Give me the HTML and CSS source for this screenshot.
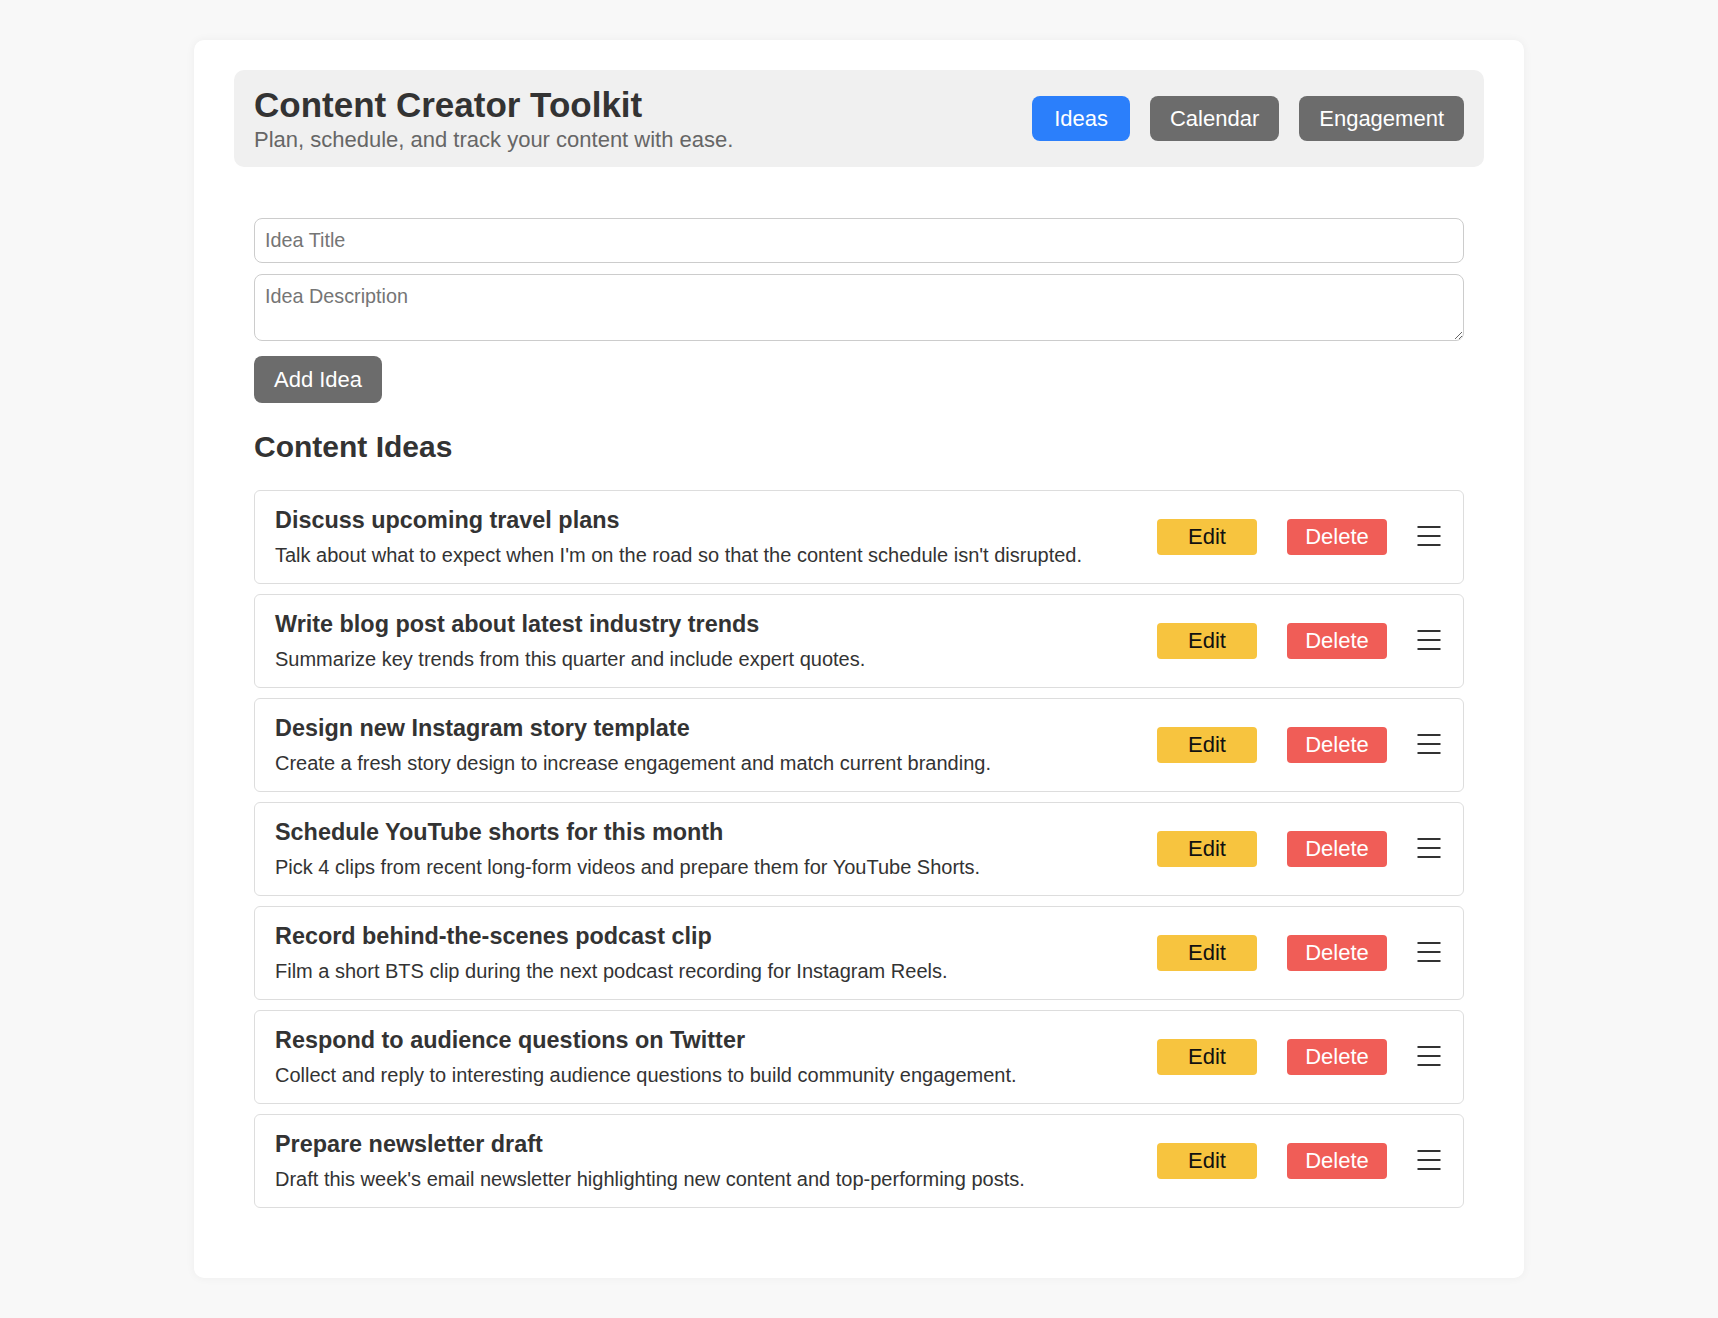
FILE: index.html
```html
<!DOCTYPE html>
<html lang="en">
<head>
<meta charset="utf-8">
<title>Content Creator Toolkit</title>
<link rel="stylesheet" href="styles.css">
</head>
<body>
<div class="app">
  <header class="topbar">
    <div class="brand">
      <h1>Content Creator Toolkit</h1>
      <p>Plan, schedule, and track your content with ease.</p>
    </div>
    <nav class="tabs">
      <button class="tab active">Ideas</button>
      <button class="tab">Calendar</button>
      <button class="tab">Engagement</button>
    </nav>
  </header>

  <section class="panel">
    <form class="idea-form">
      <input class="field" type="text" placeholder="Idea Title">
      <textarea class="field area" placeholder="Idea Description"></textarea>
      <button type="button" class="add-btn">Add Idea</button>
    </form>

    <h2 class="section-title">Content Ideas</h2>

    <ul class="idea-list">
      <li class="idea">
        <div class="idea-text">
          <h3>Discuss upcoming travel plans</h3>
          <p>Talk about what to expect when I'm on the road so that the content schedule isn't disrupted.</p>
        </div>
        <div class="actions">
          <button class="btn edit">Edit</button>
          <button class="btn delete">Delete</button>
          <svg class="handle" width="24" height="20" viewBox="0 0 24 20"><path d="M0.5 1h23M0.5 10h23M0.5 19h23" stroke="#333" stroke-width="2"/></svg>
        </div>
      </li>
      <li class="idea">
        <div class="idea-text">
          <h3>Write blog post about latest industry trends</h3>
          <p>Summarize key trends from this quarter and include expert quotes.</p>
        </div>
        <div class="actions">
          <button class="btn edit">Edit</button>
          <button class="btn delete">Delete</button>
          <svg class="handle" width="24" height="20" viewBox="0 0 24 20"><path d="M0.5 1h23M0.5 10h23M0.5 19h23" stroke="#333" stroke-width="2"/></svg>
        </div>
      </li>
      <li class="idea">
        <div class="idea-text">
          <h3>Design new Instagram story template</h3>
          <p>Create a fresh story design to increase engagement and match current branding.</p>
        </div>
        <div class="actions">
          <button class="btn edit">Edit</button>
          <button class="btn delete">Delete</button>
          <svg class="handle" width="24" height="20" viewBox="0 0 24 20"><path d="M0.5 1h23M0.5 10h23M0.5 19h23" stroke="#333" stroke-width="2"/></svg>
        </div>
      </li>
      <li class="idea">
        <div class="idea-text">
          <h3>Schedule YouTube shorts for this month</h3>
          <p>Pick 4 clips from recent long-form videos and prepare them for YouTube Shorts.</p>
        </div>
        <div class="actions">
          <button class="btn edit">Edit</button>
          <button class="btn delete">Delete</button>
          <svg class="handle" width="24" height="20" viewBox="0 0 24 20"><path d="M0.5 1h23M0.5 10h23M0.5 19h23" stroke="#333" stroke-width="2"/></svg>
        </div>
      </li>
      <li class="idea">
        <div class="idea-text">
          <h3>Record behind-the-scenes podcast clip</h3>
          <p>Film a short BTS clip during the next podcast recording for Instagram Reels.</p>
        </div>
        <div class="actions">
          <button class="btn edit">Edit</button>
          <button class="btn delete">Delete</button>
          <svg class="handle" width="24" height="20" viewBox="0 0 24 20"><path d="M0.5 1h23M0.5 10h23M0.5 19h23" stroke="#333" stroke-width="2"/></svg>
        </div>
      </li>
      <li class="idea">
        <div class="idea-text">
          <h3>Respond to audience questions on Twitter</h3>
          <p>Collect and reply to interesting audience questions to build community engagement.</p>
        </div>
        <div class="actions">
          <button class="btn edit">Edit</button>
          <button class="btn delete">Delete</button>
          <svg class="handle" width="24" height="20" viewBox="0 0 24 20"><path d="M0.5 1h23M0.5 10h23M0.5 19h23" stroke="#333" stroke-width="2"/></svg>
        </div>
      </li>
      <li class="idea">
        <div class="idea-text">
          <h3>Prepare newsletter draft</h3>
          <p>Draft this week's email newsletter highlighting new content and top-performing posts.</p>
        </div>
        <div class="actions">
          <button class="btn edit">Edit</button>
          <button class="btn delete">Delete</button>
          <svg class="handle" width="24" height="20" viewBox="0 0 24 20"><path d="M0.5 1h23M0.5 10h23M0.5 19h23" stroke="#333" stroke-width="2"/></svg>
        </div>
      </li>
    </ul>
  </section>
</div>
</body>
</html>
```

FILE: styles.css
```css
* { box-sizing: border-box; }

body {
  margin: 0;
  background: #f8f8f8;
  font-family: "Liberation Sans", Arial, sans-serif;
  color: #333;
}

.app {
  width: 1330px;
  margin: 40px auto 42px;
  background: #fff;
  border-radius: 10px;
  box-shadow: 0 0 10px rgba(0, 0, 0, 0.05);
  padding: 30px 40px 40px;
}

.topbar {
  display: flex;
  justify-content: space-between;
  align-items: center;
  background: #f0f0f0;
  border-radius: 10px;
  padding: 14px 20px;
  margin-bottom: 31px;
}

.brand h1 {
  margin: 0 0 2px;
  font-size: 35px;
  line-height: 41px;
  font-weight: bold;
  color: #333;
}

.brand p {
  margin: 0;
  font-size: 22px;
  line-height: 26px;
  color: #666;
}

.tabs {
  display: flex;
  gap: 20px;
}

.tab {
  font-family: "Liberation Sans", Arial, sans-serif;
  font-size: 22px;
  line-height: 25px;
  padding: 10px 20px;
  border: none;
  border-radius: 8px;
  background: #6c6c6c;
  color: #fff;
}

.tab.active {
  background: #2b7ffb;
  padding: 10px 22px;
}

.panel {
  padding: 20px;
}

.idea-form {
  display: flex;
  flex-direction: column;
  align-items: flex-start;
}

.field {
  display: block;
  width: 100%;
  font-family: "Liberation Sans", Arial, sans-serif;
  font-size: 19.8px;
  line-height: 23px;
  padding: 10px;
  border: 1px solid #ccc;
  border-radius: 8px;
  color: #333;
  background: #fff;
}

.field::placeholder { color: #757575; }

.area {
  height: 67px;
  margin-top: 11px;
  resize: vertical;
}

.add-btn {
  margin-top: 15px;
  font-family: "Liberation Sans", Arial, sans-serif;
  font-size: 22px;
  line-height: 25px;
  padding: 11px 20px;
  border: none;
  border-radius: 8px;
  background: #6c6c6c;
  color: #fff;
}

.section-title {
  margin: 27px 0 26px;
  font-size: 30px;
  line-height: 34px;
  font-weight: bold;
  color: #333;
}

.idea-list {
  list-style: none;
  margin: 0;
  padding: 0;
}

.idea {
  display: flex;
  align-items: center;
  justify-content: space-between;
  border: 1px solid #ddd;
  border-radius: 6px;
  padding: 16px 22px 16px 20px;
  margin-bottom: 10px;
  background: #fff;
}

.idea-text h3 {
  margin: 0 0 10px;
  font-size: 23.4px;
  line-height: 27px;
  font-weight: bold;
  color: #333;
}

.idea-text p {
  margin: 0;
  font-size: 20px;
  line-height: 23px;
  color: #333;
}

.actions {
  display: flex;
  align-items: center;
  gap: 30px;
}

.btn {
  width: 100px;
  font-family: "Liberation Sans", Arial, sans-serif;
  font-size: 22px;
  line-height: 26px;
  padding: 5px 0;
  border: none;
  border-radius: 4px;
  text-align: center;
}

.btn.edit {
  background: #f7c43f;
  color: #111;
}

.btn.delete {
  background: #f05d57;
  color: #fff;
}

.handle {
  display: block;
  margin-top: -2px;
}
```
